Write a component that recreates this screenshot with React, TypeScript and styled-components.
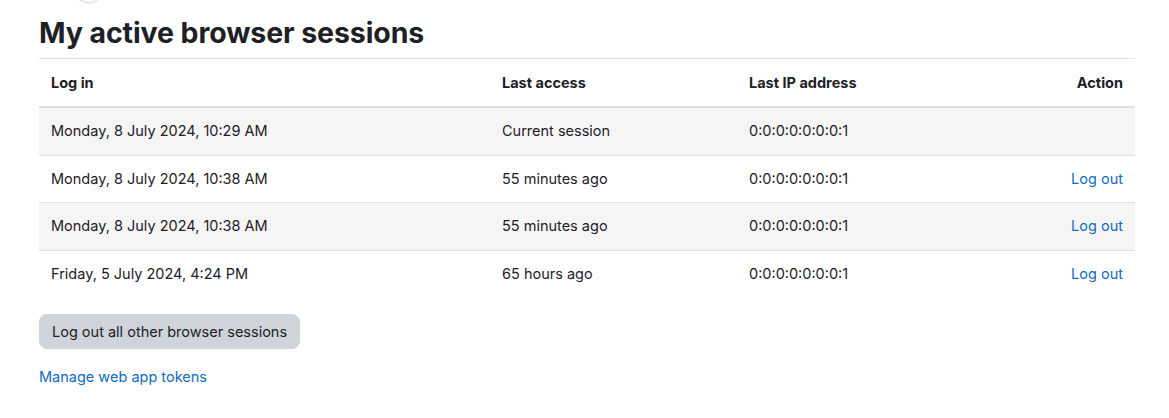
import React from "react";
import styled, { createGlobalStyle } from "styled-components";

const Global = createGlobalStyle`
  html, body { margin: 0; padding: 0; background: #fff; }
  body {
    font-family: Inter, "Noto Sans", "Liberation Sans", sans-serif;
    color: #1d2125;
    font-size: 14.5px;
    line-height: 1.5;
  }
`;

const Page = styled.div`
  position: relative;
  padding: 14px 34px 0 39px;
`;

const TopShade = styled.div`
  position: absolute;
  top: -14px;
  left: 78px;
  width: 22px;
  height: 16px;
  border-radius: 50%;
  box-shadow: 0 1px 2px rgba(0, 0, 0, 0.18);
`;

const Title = styled.h2`
  margin: 0 0 6px 0;
  font-size: 28.5px;
  font-weight: 700;
  line-height: 38px;
  letter-spacing: -0.1px;
`;

const Table = styled.table`
  width: 100%;
  table-layout: fixed;
  border-collapse: collapse;
  border-top: 1px solid #dee2e6;
`;

const Col = styled.col<{ $w?: string }>`
  width: ${(p) => p.$w || "auto"};
`;

const Th = styled.th<{ $right?: boolean }>`
  text-align: ${(p) => (p.$right ? "right" : "left")};
  font-weight: 700;
  padding: 12px 12px;
  height: 23px;
  border-bottom: 2px solid #dee2e6;
`;

const Tr = styled.tr<{ $striped?: boolean }>`
  background: ${(p) => (p.$striped ? "#f5f5f5" : "#fff")};
`;

const Td = styled.td<{ $right?: boolean }>`
  text-align: ${(p) => (p.$right ? "right" : "left")};
  padding: 12px 12px;
  height: 22.5px;
  line-height: 22.5px;
  vertical-align: middle;
  border-top: 1px solid #dee2e6;
`;

const Link = styled.a`
  color: #0f6cbf;
  text-decoration: none;
  cursor: pointer;
`;

const Button = styled.button`
  margin-top: 17px;
  display: inline-block;
  background: #ced4da;
  color: #1d2125;
  border: 1px solid #ced4da;
  border-radius: 8px;
  font: inherit;
  font-size: 14.5px;
  line-height: 23px;
  padding: 5px 12px;
  cursor: pointer;
`;

const Footer = styled.div`
  margin-top: 17px;
`;

const rows = [
  { login: "Monday, 8 July 2024, 10:29 AM", last: "Current session", ip: "0:0:0:0:0:0:0:1", action: false },
  { login: "Monday, 8 July 2024, 10:38 AM", last: "55 minutes ago", ip: "0:0:0:0:0:0:0:1", action: true },
  { login: "Monday, 8 July 2024, 10:38 AM", last: "55 minutes ago", ip: "0:0:0:0:0:0:0:1", action: true },
  { login: "Friday, 5 July 2024, 4:24 PM", last: "65 hours ago", ip: "0:0:0:0:0:0:0:1", action: true },
];

export default function App() {
  return (
    <>
      <Global />
      <Page>
        <TopShade />
        <Title>My active browser sessions</Title>
        <Table>
          <colgroup>
            <Col $w="451px" />
            <Col $w="247px" />
            <Col $w="200px" />
            <Col />
          </colgroup>
          <thead>
            <tr>
              <Th>Log in</Th>
              <Th>Last access</Th>
              <Th>Last IP address</Th>
              <Th $right>Action</Th>
            </tr>
          </thead>
          <tbody>
            {rows.map((r, i) => (
              <Tr key={i} $striped={i % 2 === 0}>
                <Td>{r.login}</Td>
                <Td>{r.last}</Td>
                <Td>{r.ip}</Td>
                <Td $right>{r.action ? <Link>Log out</Link> : null}</Td>
              </Tr>
            ))}
          </tbody>
        </Table>
        <Button>Log out all other browser sessions</Button>
        <Footer>
          <Link>Manage web app tokens</Link>
        </Footer>
      </Page>
    </>
  );
}
